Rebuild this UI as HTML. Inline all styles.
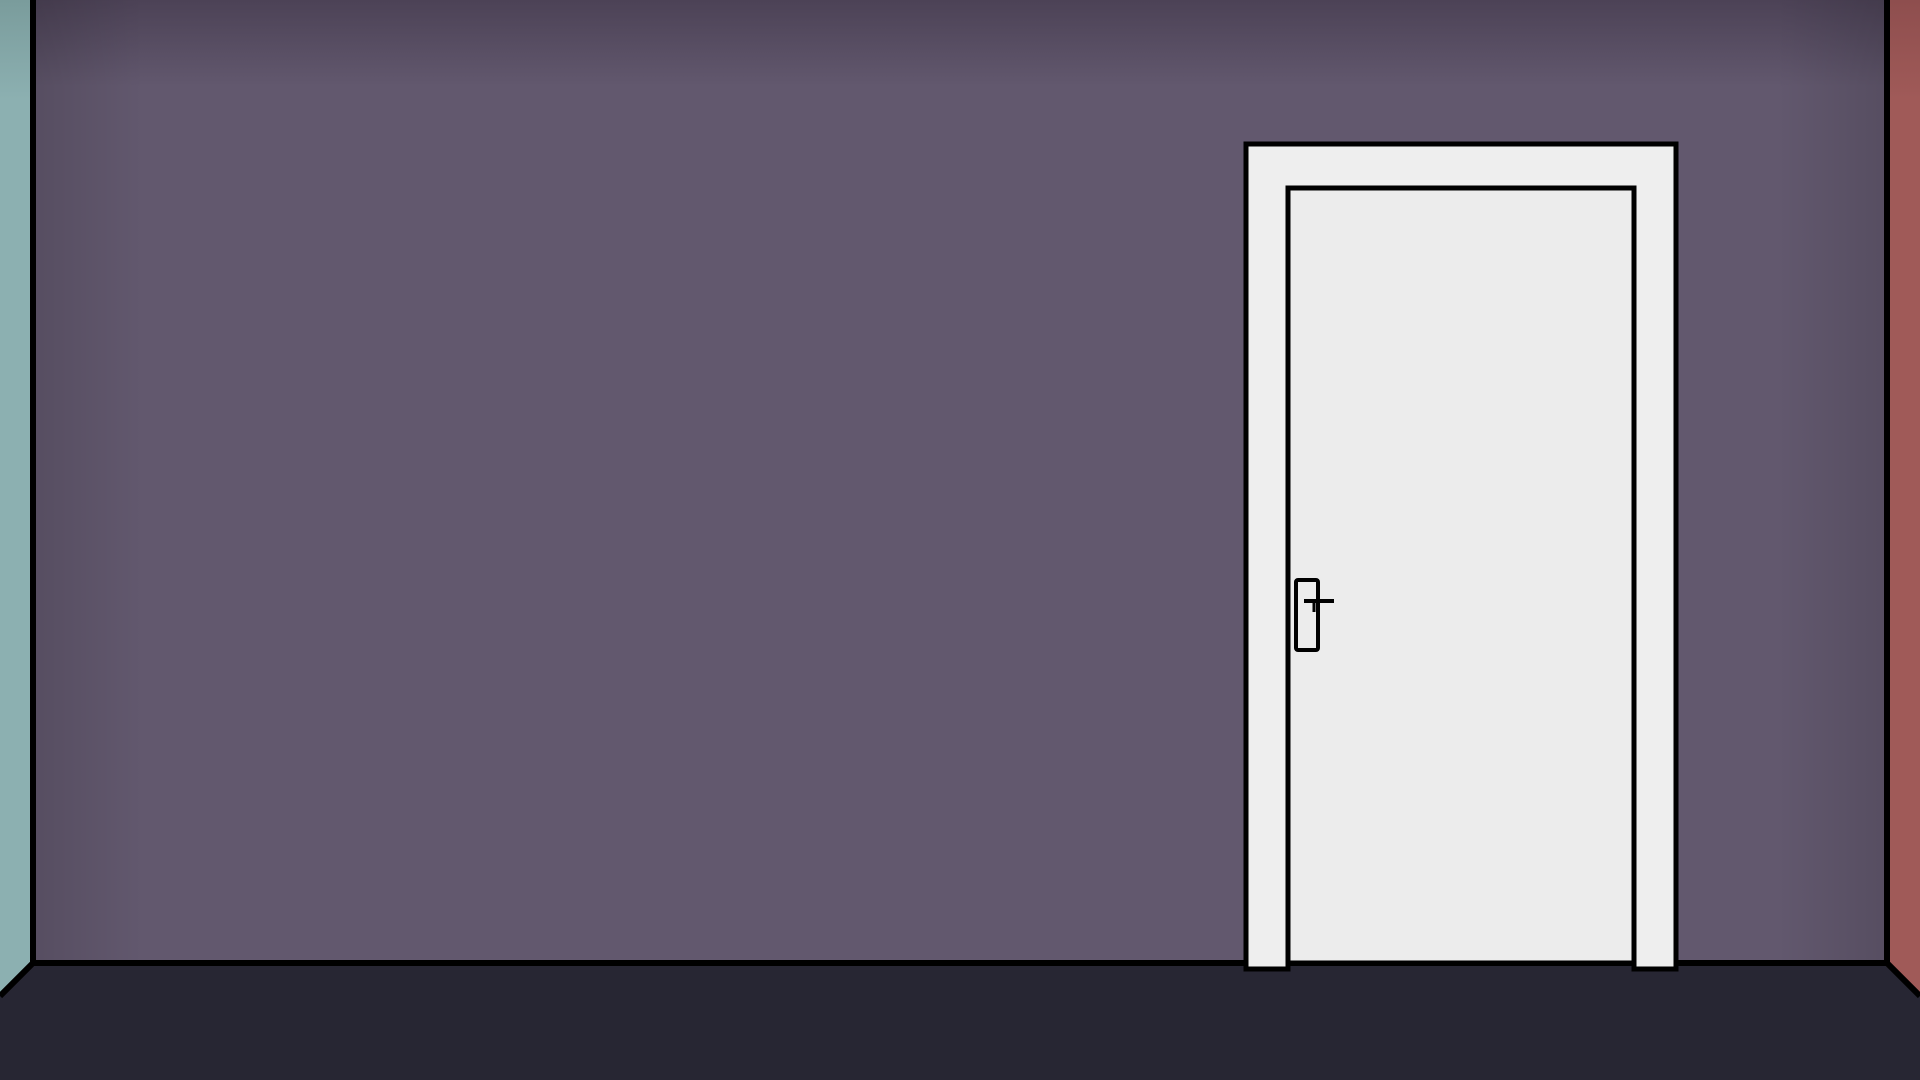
<!DOCTYPE html>
<html><head><style>
html,body{margin:0;padding:0;width:1920px;height:1080px;overflow:hidden;background:#272633}
</style></head><body>
<svg width="1920" height="1080" viewBox="0 0 1920 1080" xmlns="http://www.w3.org/2000/svg">
<defs>
<linearGradient id="wt" x1="0" y1="0" x2="0" y2="1">
<stop offset="0" stop-color="#4c4256"/><stop offset="0.09" stop-color="#62586e"/><stop offset="1" stop-color="#62586e"/>
</linearGradient>
<linearGradient id="wl" x1="0" y1="0" x2="1" y2="0">
<stop offset="0" stop-color="#000" stop-opacity="0.12"/><stop offset="0.06" stop-color="#000" stop-opacity="0"/><stop offset="0.94" stop-color="#000" stop-opacity="0"/><stop offset="1" stop-color="#000" stop-opacity="0.12"/>
</linearGradient>
<linearGradient id="lw" x1="0" y1="0" x2="0" y2="1">
<stop offset="0" stop-color="#7a9c9c"/><stop offset="0.1" stop-color="#8cb0b1"/><stop offset="1" stop-color="#8cb0b1"/>
</linearGradient>
<linearGradient id="rw" x1="0" y1="0" x2="0" y2="1">
<stop offset="0" stop-color="#8e4e4e"/><stop offset="0.1" stop-color="#a05a58"/><stop offset="1" stop-color="#a05a58"/>
</linearGradient>
</defs>
<rect x="0" y="0" width="1920" height="1080" fill="#272633"/>
<rect x="33" y="0" width="1854" height="963" fill="url(#wt)"/>
<rect x="33" y="0" width="1854" height="963" fill="url(#wl)"/>
<polygon points="0,0 33,0 33,963 0,996" fill="url(#lw)"/>
<polygon points="1887,0 1920,0 1920,996 1887,963" fill="url(#rw)"/>
<g stroke="#000" stroke-width="6" fill="none">
<line x1="33" y1="0" x2="33" y2="963"/>
<line x1="1887" y1="0" x2="1887" y2="963"/>
<line x1="30" y1="963" x2="1890" y2="963"/>
<line x1="33" y1="963" x2="0" y2="996"/>
<line x1="1887" y1="963" x2="1920" y2="996"/>
</g>
<path d="M1246,969 V144 H1676 V969 H1634 V188 H1288 V969 Z" fill="#eeeeee" stroke="#000" stroke-width="5"/>
<rect x="1288" y="188" width="346" height="775" fill="#ececec" stroke="#000" stroke-width="5"/>
<rect x="1296" y="580" width="22" height="70" rx="2" fill="none" stroke="#000" stroke-width="4"/>
<line x1="1304" y1="601" x2="1334" y2="601" stroke="#000" stroke-width="4"/>
<line x1="1314" y1="601" x2="1314" y2="612" stroke="#000" stroke-width="3"/>
</svg>
</body></html>
